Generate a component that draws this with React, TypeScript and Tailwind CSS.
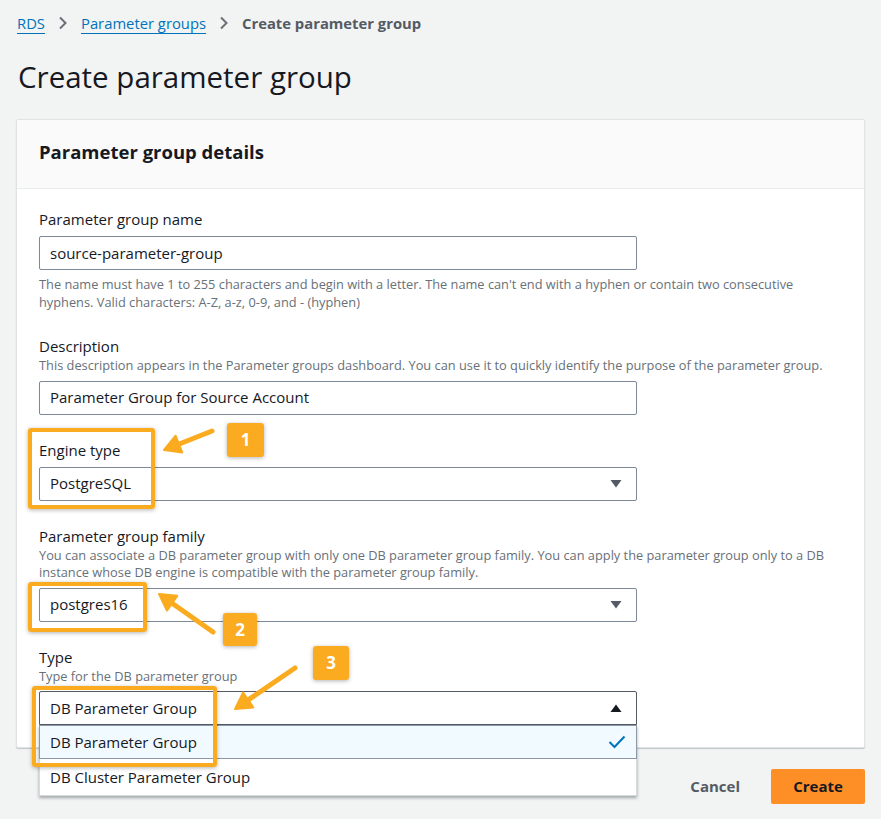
import React from 'react';

const ORANGE = '#fbab1f';

function Chevron() {
    return (
        <svg width="10" height="14" viewBox="0 0 10 14" className="mx-[13px]">
            <path d="M2 1.5 L7.5 7 L2 12.5" fill="none" stroke="#687078" strokeWidth="2" />
        </svg>
    );
}

function Caret({ up = false }: { up?: boolean }) {
    return (
        <svg width="12" height="10" viewBox="0 0 12 10">
            {up ? <path d="M0.5 9 L6 1.5 L11.5 9 Z" fill="#16191f" /> : <path d="M0.5 1 L11.5 1 L6 8.5 Z" fill="#545b64" />}
        </svg>
    );
}

function Label({ children }: { children: React.ReactNode }) {
    return <div className="text-[15px] leading-[22px] text-[#16191f]">{children}</div>;
}

function Hint({ children }: { children: React.ReactNode }) {
    return <div className="text-[12.8px] leading-[17.5px] text-[#687078]">{children}</div>;
}

function Box({ text, select = false }: { text: string; select?: boolean }) {
    return (
        <div className="mt-[6px] w-[598px] h-[34px] border border-[#7d8998] rounded-[2px] bg-white flex items-center justify-between pl-[10px] pr-[14px] text-[15px] text-[#16191f]">
            <span>{text}</span>
            {select && <Caret />}
        </div>
    );
}

function Arrow({ x1, y1, x2, y2 }: { x1: number; y1: number; x2: number; y2: number }) {
    // line from tail (x1,y1) to tip (x2,y2) with a filled head
    const a = Math.atan2(y2 - y1, x2 - x1);
    const len = 16;
    const w = 9;
    const bx = x2 - Math.cos(a) * len;
    const by = y2 - Math.sin(a) * len;
    const p1 = `${bx + Math.sin(a) * w},${by - Math.cos(a) * w}`;
    const p2 = `${bx - Math.sin(a) * w},${by + Math.cos(a) * w}`;
    return (
        <g>
            <line x1={x1} y1={y1} x2={bx + Math.cos(a) * 3} y2={by + Math.sin(a) * 3} stroke={ORANGE} strokeWidth="5" strokeLinecap="round" />
            <polygon points={`${x2},${y2} ${p1} ${p2}`} fill={ORANGE} stroke={ORANGE} strokeWidth="2" strokeLinejoin="round" />
        </g>
    );
}

function Badge({ n, className }: { n: number; className: string }) {
    return (
        <div className={`absolute flex items-center justify-center rounded-[3px] bg-[#fbab1f] text-white font-bold text-[17px] shadow-[0_1px_4px_rgba(0,0,0,0.3)] ${className}`}>
            {n}
        </div>
    );
}

export default function App() {
    return (
        <div className="relative min-h-screen bg-[#f2f3f3] font-['Open_Sans',sans-serif] px-4 pb-4">
            {/* breadcrumb */}
            <div className="flex items-center h-[46px] text-[14.8px]">
                <span className="ml-[1px] text-[#0073bb] underline underline-offset-[4px] font-medium">RDS</span>
                <Chevron />
                <span className="text-[#0073bb] underline underline-offset-[4px] font-medium">Parameter groups</span>
                <Chevron />
                <span className="text-[#545b64] font-bold">Create parameter group</span>
            </div>
            <h1 className="ml-[2px] mt-[11px] text-[29.5px] leading-[40px] text-[#16191f]">Create parameter group</h1>

            {/* panel */}
            <div className="mt-[22px] bg-white border border-[#e0e3e3] rounded-[2px] shadow-[0_1px_1px_rgba(0,28,36,0.2)]">
                <div className="h-[69px] bg-[#fafafa] border-b border-[#eaeded] px-[22px] pb-[4px] flex items-center">
                    <h2 className="text-[18.5px] font-bold text-[#16191f]">Parameter group details</h2>
                </div>
                <div className="px-[22px] pt-[19px] pb-[22px] flex flex-col gap-[24px]">
                    <div>
                        <Label>Parameter group name</Label>
                        <Box text="source-parameter-group" />
                        <div className="mt-[6px]">
                            <Hint>
                                The name must have 1 to 255 characters and begin with a letter. The name can't end with a hyphen or contain two consecutive
                                <br />
                                hyphens. Valid characters: A-Z, a-z, 0-9, and - (hyphen)
                            </Hint>
                        </div>
                    </div>
                    <div>
                        <Label>Description</Label>
                        <Hint>This description appears in the Parameter groups dashboard. You can use it to quickly identify the purpose of the parameter group.</Hint>
                        <Box text="Parameter Group for Source Account" />
                    </div>
                    <div>
                        <Label>Engine type</Label>
                        <Box text="PostgreSQL" select />
                    </div>
                    <div>
                        <Label>Parameter group family</Label>
                        <Hint>
                            You can associate a DB parameter group with only one DB parameter group family. You can apply the parameter group only to a DB
                            <br />
                            instance whose DB engine is compatible with the parameter group family.
                        </Hint>
                        <Box text="postgres16" select />
                    </div>
                    <div>
                        <Label>Type</Label>
                        <Hint>Type for the DB parameter group</Hint>
                        <div className="relative w-[598px]">
                            <div className="mt-[6px] h-[34px] border border-[#545b64] rounded-t-[2px] bg-white flex items-center justify-between pl-[10px] pr-[14px] text-[15px] text-[#16191f]">
                                <span>DB Parameter Group</span>
                                <Caret up />
                            </div>
                            <div className="absolute left-0 top-full w-full z-10 bg-white shadow-[0_2px_3px_rgba(0,28,36,0.35)] text-[15px] text-[#16191f]">
                                <div className="h-[34px] bg-[#f1faff] border border-[#8d99a8] flex items-center justify-between pl-[10px] pr-[10px]">
                                    <span>DB Parameter Group</span>
                                    <svg width="18" height="14" viewBox="0 0 18 14">
                                        <path d="M1.5 7 L6.5 12 L16.5 1.5" fill="none" stroke="#0073bb" strokeWidth="2" />
                                    </svg>
                                </div>
                                <div className="h-[37px] border border-t-0 border-[#d5dbdb] flex items-center pl-[10px]">DB Cluster Parameter Group</div>
                            </div>
                        </div>
                    </div>
                </div>
            </div>

            {/* footer actions */}
            <div className="mt-[21px] flex justify-end items-center gap-[11px]">
                <button className="px-5 h-[35px] text-[15px] font-bold text-[#545b64]">Cancel</button>
                <button className="w-[94px] h-[35px] rounded-[2px] bg-[#fd8f26] text-[15px] font-bold text-[#16191f]">Create</button>
            </div>

            {/* annotations */}
            <div className="absolute left-[28px] top-[428px] w-[127px] h-[81px] border-4 border-[#fbab1f] rounded-[3px] shadow-[0_1px_4px_rgba(0,0,0,0.3)] z-20" />
            <div className="absolute left-[28px] top-[582px] w-[119px] h-[50px] border-4 border-[#fbab1f] rounded-[3px] shadow-[0_1px_4px_rgba(0,0,0,0.3)] z-20" />
            <div className="absolute left-[32px] top-[686px] w-[185px] h-[81px] border-4 border-[#fbab1f] rounded-[3px] shadow-[0_1px_4px_rgba(0,0,0,0.3)] z-20" />
            <Badge n={1} className="left-[227px] top-[423px] w-[37px] h-[34px] z-20" />
            <Badge n={2} className="left-[223px] top-[613px] w-[34px] h-[33px] z-20" />
            <Badge n={3} className="left-[313px] top-[646px] w-[36px] h-[34px] z-20" />
            <svg className="absolute left-0 top-0 pointer-events-none z-20" width="881" height="819">
                <Arrow x1={212} y1={431} x2={164} y2={450} />
                <Arrow x1={213} y1={632} x2={159} y2={594} />
                <Arrow x1={295} y1={668} x2={235} y2={709} />
            </svg>
        </div>
    );
}
